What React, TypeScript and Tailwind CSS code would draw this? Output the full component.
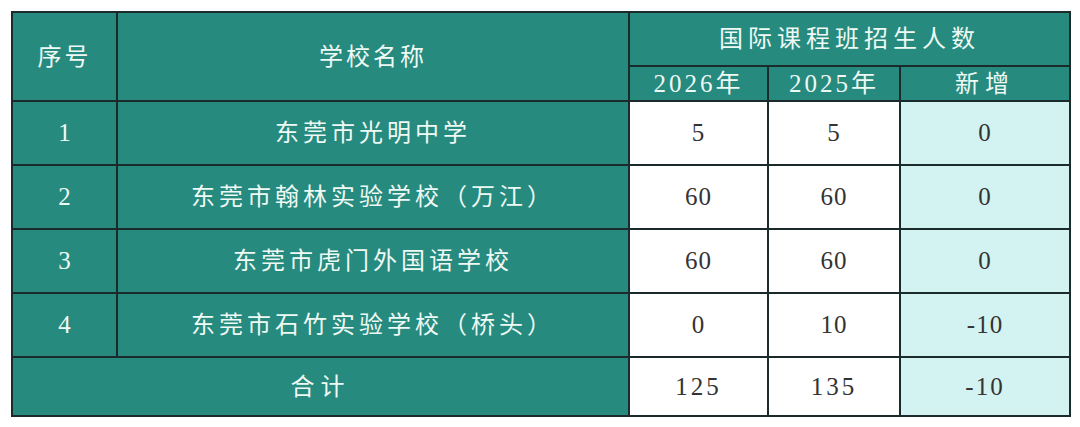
const rows = [
  { id: "1", name: "东莞市光明中学", a: "5", b: "5", d: "0" },
  { id: "2", name: "东莞市翰林实验学校（万江）", a: "60", b: "60", d: "0" },
  { id: "3", name: "东莞市虎门外国语学校", a: "60", b: "60", d: "0" },
  { id: "4", name: "东莞市石竹实验学校（桥头）", a: "0", b: "10", d: "-10" },
];

const font = "font-['Liberation_Serif','Noto_Sans_CJK_SC',serif]";

export default function App() {
  return (
    <div className={`h-[427px] w-[1080px] bg-white pl-[11px] pt-[11px] ${font}`}>
      <table className="w-[1058px] table-fixed border-collapse border-2 border-[#1b2a2a] text-center">
        <colgroup>
          <col className="w-[105px]" />
          <col className="w-[512px]" />
          <col className="w-[139px]" />
          <col className="w-[132px]" />
          <col className="w-[170px]" />
        </colgroup>
        <thead className="bg-[#268a7f] text-[24px] tracking-[3px] text-[#eef9f4]">
          <tr className="h-[54px]">
            <th rowSpan={2} className="border-2 border-[#1b2a2a] font-normal">序号</th>
            <th rowSpan={2} className="border-2 border-[#1b2a2a] font-normal">学校名称</th>
            <th colSpan={3} className="border-2 border-[#1b2a2a] font-normal tracking-[5px]">国际课程班招生人数</th>
          </tr>
          <tr className="h-[35px]">
            <th className="border-2 border-[#1b2a2a] text-[25px] font-normal leading-none">2026年</th>
            <th className="border-2 border-[#1b2a2a] text-[25px] font-normal leading-none">2025年</th>
            <th className="border-2 border-[#1b2a2a] font-normal leading-none tracking-[6px]">新增</th>
          </tr>
        </thead>
        <tbody className="text-[25px]">
          {rows.map((r) => (
            <tr key={r.id} className="h-[64px]">
              <td className="border-2 border-[#1b2a2a] bg-[#268a7f] text-[#eef9f4]">{r.id}</td>
              <td className="border-2 border-[#1b2a2a] bg-[#268a7f] text-[24px] tracking-[4px] text-[#eef9f4]">{r.name}</td>
              <td className="border-2 border-[#1b2a2a] bg-white tracking-[1px] text-[#333333]">{r.a}</td>
              <td className="border-2 border-[#1b2a2a] bg-white tracking-[1px] text-[#333333]">{r.b}</td>
              <td className="border-2 border-[#1b2a2a] bg-[#d3f3f2] tracking-[1px] text-[#333333]">{r.d}</td>
            </tr>
          ))}
          <tr className="h-[59px]">
            <td colSpan={2} className="border-2 border-[#1b2a2a] bg-[#268a7f] text-[24px] tracking-[6px] text-[#eef9f4]">合计</td>
            <td className="border-2 border-[#1b2a2a] bg-white tracking-[3px] text-[#333333]">125</td>
            <td className="border-2 border-[#1b2a2a] bg-white tracking-[3px] text-[#333333]">135</td>
            <td className="border-2 border-[#1b2a2a] bg-[#d3f3f2] tracking-[2px] text-[#333333]">-10</td>
          </tr>
        </tbody>
      </table>
    </div>
  );
}
